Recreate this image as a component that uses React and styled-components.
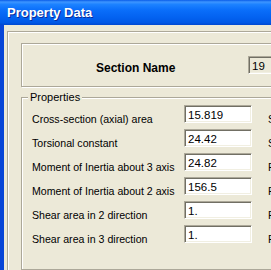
import React from 'react';
import styled, { createGlobalStyle } from 'styled-components';

const rows = [
  { label: 'Cross-section (axial) area', value: '15.819', unit: 'Section modulus about 3 axis' },
  { label: 'Torsional constant', value: '24.42', unit: 'Section modulus about 2 axis' },
  { label: 'Moment of Inertia about 3 axis', value: '24.82', unit: 'Plastic modulus about 3 axis' },
  { label: 'Moment of Inertia about 2 axis', value: '156.5', unit: 'Plastic modulus about 2 axis' },
  { label: 'Shear area in 2 direction', value: '1.', unit: 'Radius of Gyration about 3 axis' },
  { label: 'Shear area in 3 direction', value: '1.', unit: 'Radius of Gyration about 2 axis' }
];

const App = () => (
  <>
    <GlobalStyle />
    <Window>
      <TitleBar>
        <Title>Property Data</Title>
      </TitleBar>
      <Client>
        <Frame>
          <SectionPanel>
            <SectionLabel>Section Name</SectionLabel>
            <Field readOnly>19</Field>
          </SectionPanel>

          <GroupBox>
            <Legend>Properties</Legend>
            {rows.map(row => (
              <PropRow key={row.label}>
                <RowLabel>{row.label}</RowLabel>
                <Field>{row.value}</Field>
                <UnitLabel>{row.unit}</UnitLabel>
              </PropRow>
            ))}
          </GroupBox>
        </Frame>
      </Client>
    </Window>
  </>
);

//CSS Styled-components
const GlobalStyle = createGlobalStyle`
  html, body {
    margin: 0;
    padding: 0;
    width: 271px;
    height: 270px;
    overflow: hidden;
    background: #ECE9D8;
  }
`;

const Window = styled.div`
  width: 271px;
  height: 270px;
  display: flex;
  flex-direction: column;
  font-family: "Liberation Sans", Arial, sans-serif;
  font-size: 10.6px;
  color: #000;
  overflow: hidden;
`;

const TitleBar = styled.div`
  height: 25px;
  flex-shrink: 0;
  display: flex;
  align-items: center;
  padding-left: 7px;
  background: linear-gradient(to bottom, #0A5CE8 0%, #3D95FF 8%, #1C82FF 18%, #0A6EFA 40%, #0362F0 70%, #0058E6 90%, #0048D0 100%);
`;

const Title = styled.div`
  color: #fff;
  font-weight: bold;
  font-size: 13px;
  text-shadow: 1px 1px 0 #0A2C9C;
`;

const Client = styled.div`
  flex: 1;
  display: flex;
  border-left: 4px solid #0846D8;
  padding: 6px 0 0 3px;
  overflow: hidden;
  background: #ECE9D8;
`;

const Frame = styled.div`
  flex: 0 0 360px;
  border-top: 1px solid #ACA899;
  border-left: 1px solid #ACA899;
  box-shadow: inset 1px 1px 0 #fff;
  padding: 11px 0 0 13px;
`;

const SectionPanel = styled.div`
  height: 44px;
  box-sizing: border-box;
  display: flex;
  align-items: center;
  padding-left: 74px;
  border: 1px solid #ACA899;
  box-shadow: inset 1px 1px 0 #fff, 1px 1px 0 #fff;
`;

const SectionLabel = styled.div`
  flex: 0 0 152px;
  margin-top: 5px;
  font-size: 12px;
  font-weight: bold;
`;

const Field = styled.div`
  width: 68px;
  height: 18px;
  box-sizing: border-box;
  flex-shrink: 0;
  padding: 2px 0 0 3px;
  font-size: 11.5px;
  line-height: 14px;
  white-space: nowrap;
  background: ${props => (props.readOnly ? '#ECE9D8' : '#fff')};
  border-top: 1px solid #ACA899;
  border-left: 1px solid #ACA899;
  border-right: 1px solid #fff;
  border-bottom: 1px solid #fff;
  box-shadow: inset 1px 1px 0 #716F64, inset -1px -1px 0 #F1EFE2;
`;

const GroupBox = styled.div`
  position: relative;
  margin-top: 10px;
  padding: 7px 0 20px 10px;
  border: 1px solid #ACA899;
  box-shadow: inset 1px 1px 0 #fff, 1px 1px 0 #fff;
`;

const Legend = styled.div`
  position: absolute;
  top: -7px;
  left: 6px;
  padding: 0 2px;
  font-size: 11px;
  line-height: 13px;
  background: #ECE9D8;
`;

const PropRow = styled.div`
  display: grid;
  grid-template-columns: 152px 68px auto;
  height: 18px;
  margin-bottom: 6px;
`;

const RowLabel = styled.div`
  padding-top: 8px;
  line-height: 13px;
  white-space: nowrap;
`;

const UnitLabel = styled(RowLabel)`
  padding-left: 16px;
`;

export default App;
